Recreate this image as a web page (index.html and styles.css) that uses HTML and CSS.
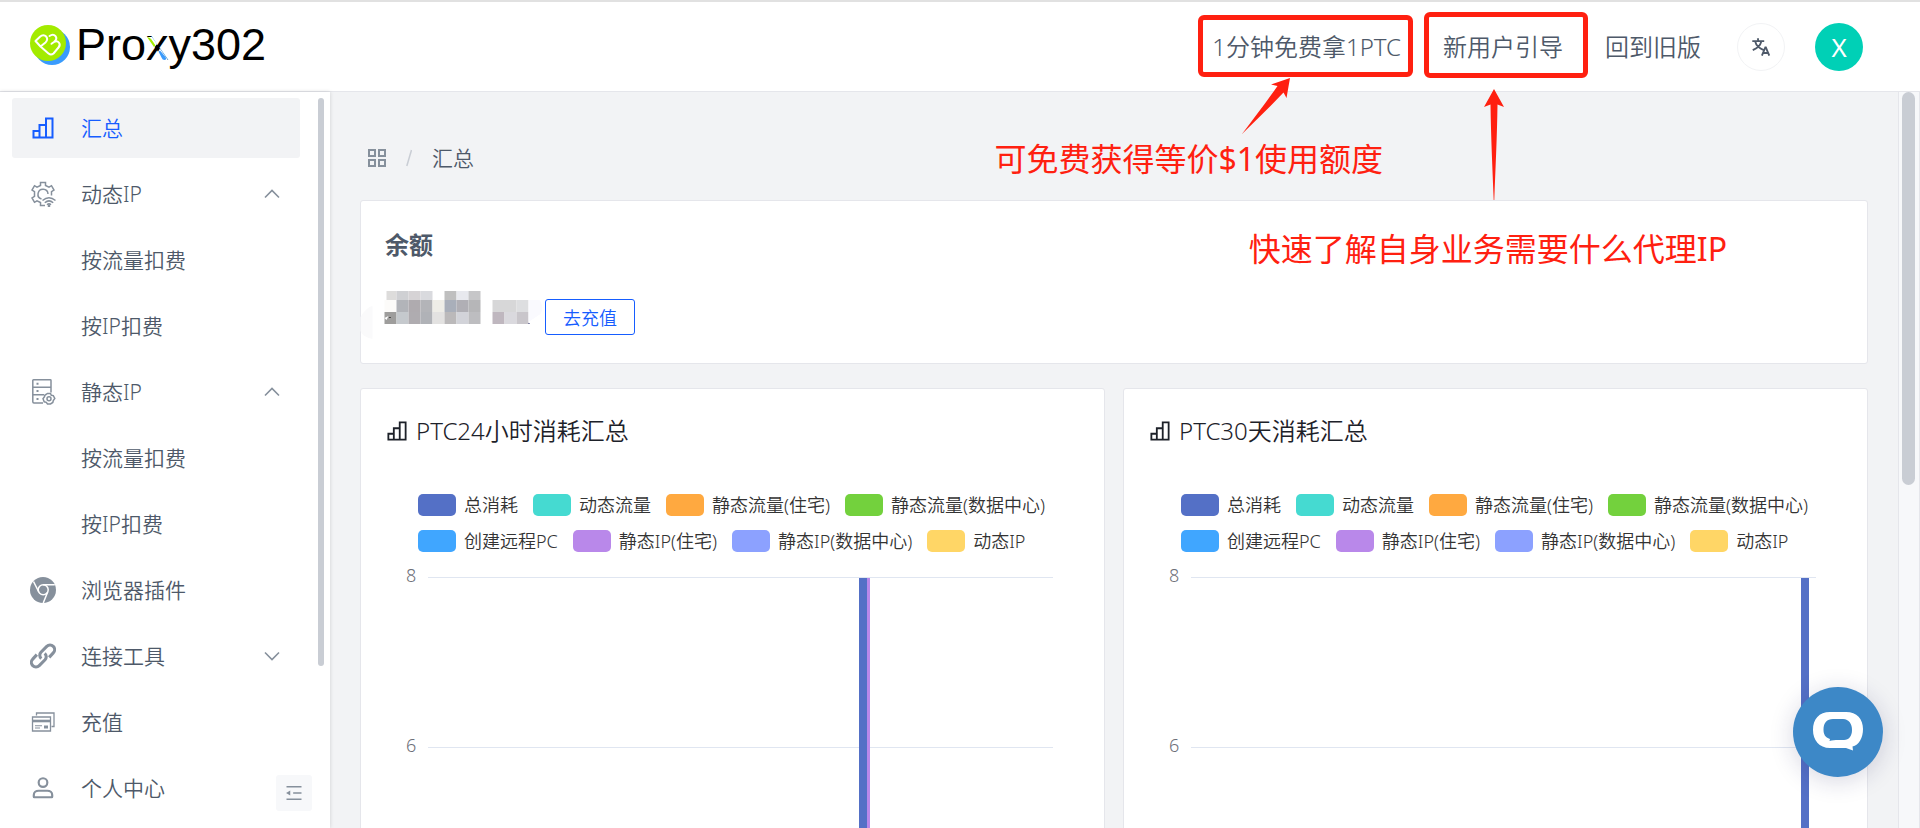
FILE: index.html
```html
<!DOCTYPE html>
<html lang="zh-CN">
<head>
<meta charset="utf-8">
<meta name="viewport" content="width=device-width, initial-scale=1">
<title>Proxy302 - 汇总</title>
<link rel="stylesheet" href="styles.css">
</head>
<body>
<svg class="sprite" aria-hidden="true">
  <symbol id="i-bars" viewBox="0 0 22 22"><path d="M1.500 20.500V14H7.500V20.500ZM7.500 20.500V8H14V20.500ZM14 20.500V1.500H20.500V20.500Z" fill="none" stroke="currentColor" stroke-width="2"/></symbol>
  <symbol id="i-down" viewBox="0 0 16 16"><path d="M1 4.500 8 11.500 15 4.500" fill="none" stroke="currentColor" stroke-width="1.600"/></symbol>
  <symbol id="i-up" viewBox="0 0 16 16"><path d="M1 11.500 8 4.500 15 11.500" fill="none" stroke="currentColor" stroke-width="1.600"/></symbol>
</svg>

<header class="topbar">
  <a class="brand" href="#" aria-label="Proxy302">
    <svg class="brand-mark" viewBox="0 0 40 40" aria-hidden="true">
      <circle cx="22" cy="22" r="18" fill="#3a9bfc"/>
      <circle cx="18" cy="18" r="18" fill="#a3eb00"/>
      <path d="M10.500 21.500 5.500 16 10 11.800C14.500 7.500 20 13.500 15.500 17.500L10.500 21.500 18.500 28.500C20 29.800 22 29.800 23.500 28.500L28.500 22.500C31.500 19 28 14.500 24 17L21.500 18.800M24 17C29 13 24.500 7.500 19.500 11" fill="none" stroke="#fff" stroke-width="2" stroke-linejoin="round" stroke-linecap="round"/>
    </svg>
    <span class="brand-name">Pro<span class="brand-x">x<svg viewBox="0 0 22 24" aria-hidden="true"><path d="M0 0H6L11 7 8 11ZM14 11.500 22.500 24H15L11 16Z" fill="#fff"/><path d="M1 0Q4 0 5.500 2.500L9.500 8.500 8 10Z" fill="#a3eb00"/><path d="M12.500 14.500 14 13.500 19.500 20Q21 23 18.500 23 16.500 23 15.500 20.500Z" fill="#3a9bfc"/></svg></span>y302</span>
  </a>
  <nav class="top-links">
    <a class="top-link boxed-a" href="#">1分钟免费拿1PTC</a>
    <a class="top-link boxed-b" href="#">新用户引导</a>
    <a class="top-link" href="#">回到旧版</a>
  </nav>
  <button class="lang" type="button" aria-label="语言">
    <svg viewBox="0 0 48 48" aria-hidden="true"><path d="m42 43-2.385-6M26 43l2.384-6m11.231 0-.795-2-4.180-10h-1.280l-4.181 10-.795 2m11.231 0h-11.230M17 5l1 5M5 11h26M11 11s1.889 7.826 6.611 12.174C22.333 27.522 30 31 30 31M25 11s-1.889 7.826-6.611 12.174C13.667 27.522 6 31 6 31" fill="none" stroke="currentColor" stroke-width="4"/></svg>
  </button>
  <button class="avatar" type="button">X</button>
</header>

<div class="body">
  <aside class="sidebar">
    <nav class="menu">
      <a class="item active" href="#"><svg class="ico bars" aria-hidden="true"><use href="#i-bars"/></svg><span>汇总</span></a>
      <a class="item" href="#"><svg class="ico" viewBox="0 0 26 26" fill="none" stroke="currentColor" stroke-width="1.500" aria-hidden="true"><path d="M15 24.500H10.500V21.500L7 19.800 4.500 21.300 2 17 4.500 15.300V10.700L2 9 4.500 4.700 7 6.200 10.500 4.500V1.500H15.500V4.500L19 6.200 21.500 4.700 24 9 21.500 10.700V14.500"/><path d="M11.500 18A5 5 0 1 1 18 13"/><path d="M12.500 19.500Q19 14 25.500 19.500M14.800 21.700Q19 18 23.200 21.700M17 23.700Q19 22 21 23.700"/><circle cx="19" cy="25" r=".6" fill="currentColor"/></svg><span>动态IP</span><svg class="chev" aria-hidden="true"><use href="#i-up"/></svg></a>
      <a class="item" href="#"><span class="ico"></span><span>按流量扣费</span></a>
      <a class="item" href="#"><span class="ico"></span><span>按IP扣费</span></a>
      <a class="item" href="#"><svg class="ico" viewBox="0 0 26 26" fill="none" stroke="currentColor" stroke-width="1.500" aria-hidden="true"><path d="M13 24H4Q2.800 24 2.800 22.800V1.500Q2.800.8 3.500.8H20.300Q21 .8 21 1.500V13.500M2.800 8.200H21M2.800 15.800H14"/><path d="M6.500 4.700h2M6.500 12h2M6.500 20h2" stroke-width="2"/><path d="M17.500 14.500H20.500L21.300 16.300 23.300 16.600 24.800 19.500 23.300 21.500 22.800 23.500 20.500 25H17.500L16.300 23.300 14.200 22.800 13 19.700 14.500 17.800 14.800 16.300Z"/><circle cx="19" cy="19.800" r="2"/></svg><span>静态IP</span><svg class="chev" aria-hidden="true"><use href="#i-up"/></svg></a>
      <a class="item" href="#"><span class="ico"></span><span>按流量扣费</span></a>
      <a class="item" href="#"><span class="ico"></span><span>按IP扣费</span></a>
      <a class="item" href="#"><svg class="ico" viewBox="0 0 26 26" aria-hidden="true"><circle cx="13" cy="13" r="13" fill="currentColor"/><circle cx="13.200" cy="12.700" r="5" fill="none" stroke="#fff" stroke-width="1.500"/><path d="M3.500 4.500 8.800 15M13 7.700H24.800M17.700 15 13.200 26" fill="none" stroke="#fff" stroke-width="1.500"/></svg><span>浏览器插件</span></a>
      <a class="item" href="#"><svg class="ico" viewBox="5 5 38 38" aria-hidden="true"><path d="m15 22-6 6.500a6.500 6.500 0 0 0 9.500 9.500l8.500-8.500a6.500 6.500 0 0 0-.5-9.300m6.500 5.800 6-6.500a6.500 6.500 0 0 0-9.500-9.500l-8.500 8.500a6.500 6.500 0 0 0 .5 9.300" fill="none" stroke="currentColor" stroke-width="4.500"/></svg><span>连接工具</span><svg class="chev" aria-hidden="true"><use href="#i-down"/></svg></a>
      <a class="item" href="#"><svg class="ico" viewBox="0 0 26 26" fill="none" stroke="currentColor" aria-hidden="true"><path d="M6.500 6.500V4H24V17.500H21.500" stroke-width="1.300"/><path d="M2.500 8H20.500V22H2.500Z" stroke-width="1.300"/><path d="M2.500 12H20.500" stroke-width="2.600"/><path d="M5 16.700h7M5 19h5" stroke-width="1.100"/><path d="M14 18h4" stroke-width="3"/></svg><span>充值</span></a>
      <a class="item" href="#"><svg class="ico" viewBox="0 0 48 48" fill="none" stroke="currentColor" stroke-width="4" aria-hidden="true"><path d="M7 37c0-4.970 4.030-8 9-8h16c4.970 0 9 3.030 9 8v3a1 1 0 0 1-1 1H8a1 1 0 0 1-1-1v-3Z"/><circle cx="24" cy="14" r="8"/></svg><span>个人中心</span></a>
    </nav>
    <div class="side-thumb"></div>
    <button class="fold" type="button" aria-label="收起菜单">
      <svg viewBox="0 0 48 48" aria-hidden="true"><path d="M42 9H6M42 24H22M42 39H6" fill="none" stroke="currentColor" stroke-width="4"/><path d="M15 30 5 24 15 18Z" fill="currentColor"/></svg>
    </button>
  </aside>

  <main class="main">
    <nav class="crumbs" aria-label="breadcrumb">
      <svg class="apps" viewBox="0 0 18 18" aria-hidden="true"><path d="M1 1H7V7H1ZM11 1H17V7H11ZM1 11H7V17H1ZM11 11H17V17H11Z" fill="none" stroke="currentColor" stroke-width="2"/></svg>
      <svg class="slash" viewBox="0 0 6 18" aria-hidden="true"><path d="M5.500 1 .8 17" stroke="currentColor" stroke-width="1.500"/></svg>
      <span>汇总</span>
    </nav>

    <section class="card balance">
      <h2>余额</h2>
      <div class="balance-row">
        <svg class="mosaic" viewBox="0 0 160 33" aria-hidden="true">
          <path d="M-24 26Q-18 16 -12 15V48Q-22 46-24 40Z" fill="#fafafb"/>
          <g><rect x="2" width="10" height="9" fill="#dddcdb"/><rect x="12" width="12" height="9" fill="#cfd0d3"/><rect x="24" width="12" height="9" fill="#d6d3d5"/><rect x="36" width="12" height="9" fill="#d9dade"/><rect x="60" width="12" height="9" fill="#bfbfbf"/><rect x="72" width="12" height="9" fill="#e8e9ee"/><rect x="84" width="12" height="9" fill="#c6c6c8"/></g>
          <g><rect y="9" width="12" height="12" fill="#fcfbf9"/><rect x="12" y="9" width="12" height="12" fill="#b2b4b9"/><rect x="24" y="9" width="12" height="12" fill="#afabaf"/><rect x="36" y="9" width="12" height="12" fill="#b3b4b8"/><rect x="48" y="9" width="12" height="12" fill="#eeede7"/><rect x="60" y="9" width="12" height="12" fill="#a9afba"/><rect x="72" y="9" width="12" height="12" fill="#b0afb5"/><rect x="84" y="9" width="12" height="12" fill="#b6b6b8"/></g>
          <g><rect y="21" width="12" height="12" fill="#9e9d9c"/><rect x="12" y="21" width="12" height="12" fill="#c5c9cd"/><rect x="24" y="21" width="12" height="12" fill="#afacb0"/><rect x="36" y="21" width="12" height="12" fill="#b0b2b7"/><rect x="48" y="21" width="12" height="12" fill="#e3e2e1"/><rect x="60" y="21" width="12" height="12" fill="#bbb9ba"/><rect x="72" y="21" width="12" height="12" fill="#d2d3d9"/><rect x="84" y="21" width="12" height="12" fill="#bdbdc0"/></g>
          <g><rect x="108" y="9" width="24" height="12" fill="#d7d7d8"/><rect x="132" y="9" width="12" height="12" fill="#dddee0"/><rect x="108" y="21" width="12" height="12" fill="#bfb7bf"/><rect x="120" y="21" width="12" height="12" fill="#dad9de"/><rect x="132" y="21" width="12" height="12" fill="#c9c6cb"/></g>
          <path d="M144 9H155Q160 16 156 23L144 31Z" fill="#fafafe"/><path d="M0 27 4 25 2 29Z" fill="#fff"/><rect x="144" y="32" width="1" height="1" fill="#1d2160"/><rect x="5" y="26" width="1" height="1" fill="#000"/>
        </svg>
        <button class="recharge" type="button">去充值</button>
      </div>
    </section>

    <div class="charts">
      <section class="card chart">
        <h3><svg class="bars" aria-hidden="true"><use href="#i-bars"/></svg>PTC24小时消耗汇总</h3>
        <ul class="legend">
          <li><i class="c1"></i>总消耗</li><li><i class="c2"></i>动态流量</li><li><i class="c3"></i>静态流量(住宅)</li><li><i class="c4"></i>静态流量(数据中心)</li><li><i class="c5"></i>创建远程PC</li><li><i class="c6"></i>静态IP(住宅)</li><li><i class="c7"></i>静态IP(数据中心)</li><li><i class="c8"></i>动态IP</li>
        </ul>
        <div class="plot">
          <div class="axis"><span>8</span><span>6</span></div>
          <div class="grid"><div class="band"></div><div class="band"></div>
            <div class="bar" style="left:69%"><i class="c1"></i><i class="thin c6"></i></div>
          </div>
        </div>
      </section>
      <section class="card chart">
        <h3><svg class="bars" aria-hidden="true"><use href="#i-bars"/></svg>PTC30天消耗汇总</h3>
        <ul class="legend">
          <li><i class="c1"></i>总消耗</li><li><i class="c2"></i>动态流量</li><li><i class="c3"></i>静态流量(住宅)</li><li><i class="c4"></i>静态流量(数据中心)</li><li><i class="c5"></i>创建远程PC</li><li><i class="c6"></i>静态IP(住宅)</li><li><i class="c7"></i>静态IP(数据中心)</li><li><i class="c8"></i>动态IP</li>
        </ul>
        <div class="plot">
          <div class="axis"><span>8</span><span>6</span></div>
          <div class="grid"><div class="band"></div><div class="band"></div>
            <div class="bar" style="left:97.6%"><i class="c1"></i></div>
          </div>
        </div>
      </section>
    </div>
  </main>
  <div class="scroll"><div class="scroll-thumb"></div></div>
</div>

<svg class="arrows" viewBox="0 0 270 130" aria-hidden="true">
  <path d="M50 0 46.500 20 43.500 14.500C30 29 16 42 2 56 14 40 27 23 37.500 8L31 6.500Z" fill="#ff2010"/>
  <path d="M254 11 264 29 257.500 26.500C257 60 255.500 90 254.300 122H253.700C252.500 90 251 60 250.500 26.500L244 29Z" fill="#ff2010"/>
</svg>
<p class="note note-a">可免费获得等价$1使用额度</p>
<p class="note note-b">快速了解自身业务需要什么代理IP</p>

<button class="chat" type="button" aria-label="在线客服">
  <svg viewBox="0 0 50 40" aria-hidden="true"><path d="M17 0H33C44 0 50 7 50 17 50 26 46 33 39.500 34.500L40 38.500 33 36H17C6 36 0 28 0 18 0 7 6 0 17 0Z" fill="#fff"/><path d="M20 7H30C36 7 39 12 39 18 39 24 36 28 31 28 26 28 21 27.500 16.500 29L17 27C12 25.500 10.500 22 10.500 17.500 10.500 11 14 7 20 7Z" fill="#3d88c7"/></svg>
</button>
</body>
</html>
```
FILE: styles.css
```css
* { box-sizing: border-box; }

body {
  margin: 0;
  height: 100vh;
  display: flex;
  flex-direction: column;
  overflow: hidden;
  position: relative;
  background: #f2f3f5;
  color: #4e5969;
  font-family: "Noto Sans", "Noto Sans CJK SC", sans-serif;
  font-size: 21px;
  font-weight: 350;
}

a { color: inherit; text-decoration: none; }
button { font: inherit; padding: 0; border: 0; cursor: pointer; }
h2, h3, p, ul { margin: 0; padding: 0; }
svg { display: block; }
.sprite { display: none; }

/* Top bar */
.topbar {
  flex: none;
  display: flex;
  align-items: center;
  height: 92px;
  padding: 0 57px 0 30px;
  background: #fff;
  border-top: 2px solid #e1e1e1;
  border-bottom: 1px solid #e5e6eb;
}
.brand { display: flex; align-items: center; gap: 6px; margin-right: auto; padding-bottom: 4px; color: #000; }
.brand-mark { width: 40px; height: 40px; }
.brand-name { font: 400 45px/48px "Liberation Sans", Arial, sans-serif; }
.brand-x { position: relative; }
.brand-x svg { position: absolute; left: 0; bottom: 9px; width: 22px; height: 24px; }
.top-links { display: flex; gap: 42px; margin-right: 36px; font-size: 24px; line-height: 36px; }
.top-link { position: relative; white-space: nowrap; }
.top-link::before {
  position: absolute;
  border: 5px solid #ff2010;
  border-radius: 6px;
}
.boxed-a::before { content: ""; inset: -14px -12px -12px -14px; }
.boxed-b::before { content: ""; inset: -17px -25px -13px -19px; }
.lang {
  width: 48px;
  height: 48px;
  display: grid;
  place-items: center;
  margin-right: 30px;
  border: 1px solid #f2f3f5;
  border-radius: 50%;
  background: #fff;
  color: #4e5969;
}
.lang svg { width: 22px; height: 22px; }
.avatar {
  width: 48px;
  height: 48px;
  border-radius: 50%;
  background: #00d0b6;
  color: #fff;
  font-size: 26px;
  font-weight: 400;
}

/* Shell */
.body { flex: 1; min-height: 0; display: flex; }
.sidebar {
  flex: none;
  position: relative;
  width: 330px;
  display: flex;
  justify-content: space-between;
  padding: 6px 6px 0 12px;
  background: #fff;
  box-shadow: 0 0 4px rgba(0, 0, 0, .15);
}
.menu { width: 288px; display: flex; flex-direction: column; gap: 6px; }
.item {
  flex: none;
  display: flex;
  align-items: center;
  gap: 25px;
  height: 60px;
  padding: 0 20px 0 18px;
  border-radius: 3px;
}
.item span { padding-bottom: 2px; }
.item.active { background: #f2f3f5; color: #165dff; }
.ico { flex: none; width: 26px; height: 26px; color: #86909c; }
.ico.bars { width: 22px; height: 22px; margin: 0 2px; color: #165dff; }
.chev { width: 16px; height: 16px; margin-left: auto; color: #86909c; }
.side-thumb { width: 6px; height: 568px; border-radius: 3px; background: #c9cdd4; }
.fold {
  position: absolute;
  right: 18px;
  bottom: 17px;
  width: 36px;
  height: 36px;
  display: grid;
  place-items: center;
  border-radius: 3px;
  background: #f7f8fa;
  color: #86909c;
}
.fold svg { width: 20px; height: 20px; }

.main {
  flex: 1;
  min-width: 0;
  overflow: hidden;
  padding: 48px 30px 0;
}
.scroll {
  flex: none;
  width: 22px;
  display: flex;
  padding-left: 3px;
  background: #f7f8fa;
  border: solid #e5e6eb;
  border-width: 0 1px;
}
.scroll-thumb { width: 13px; height: 393px; border-radius: 7px; background: #c9cdd4; }

/* Content */
.crumbs { display: flex; align-items: center; gap: 20px; height: 36px; padding-left: 8px; }
.crumbs span { padding-bottom: 2px; }
.apps { width: 18px; height: 18px; color: #86909c; }
.slash { width: 6px; height: 18px; color: #c9cdd4; }
.card { background: #fff; border: 1px solid #e5e6eb; border-radius: 3px; }
.balance { margin: 24px 0; padding: 26px 24px 28px; }
.balance h2 { font-size: 24px; line-height: 36px; font-weight: 700; }
.balance-row { display: flex; align-items: flex-end; margin: 28px 0 0 -1px; height: 44px; }
.mosaic { width: 161px; height: 33px; overflow: visible; align-self: flex-start; }
.recharge {
  width: 90px;
  height: 36px;
  border: 1px solid #165dff;
  border-radius: 3px;
  background: #fff;
  color: #165dff;
  font-size: 18px;
}

.charts { display: flex; gap: 18px; }
.chart { flex: 1; min-width: 0; padding: 24px 51px 0 45px; }
.chart h3 {
  display: flex;
  align-items: center;
  gap: 9px;
  margin-left: -19px;
  color: #1d2129;
  font-size: 24px;
  line-height: 36px;
  font-weight: 350;
}
.chart .bars { width: 20px; height: 20px; }
.legend {
  display: flex;
  flex-wrap: wrap;
  column-gap: 15px;
  margin-top: 38px;
  padding-left: 12px;
  list-style: none;
  color: #333;
  font-size: 18px;
  line-height: 36px;
}
.legend li { display: flex; align-items: center; gap: 8px; white-space: nowrap; }
.legend i { width: 38px; height: 22px; border-radius: 5px; }
.c1 { background: #5470c6; }
.c2 { background: #45dad1; }
.c3 { background: #ffa940; }
.c4 { background: #73d13d; }
.c5 { background: #40a6ff; }
.c6 { background: #b988ea; }
.c7 { background: #8ca1ff; }
.c8 { background: #ffd666; }

.plot { display: flex; gap: 12px; margin-top: 18px; }
.axis {
  display: flex;
  flex-direction: column;
  margin-top: -14px;
  color: #6e7079;
  font-size: 18px;
  line-height: 24px;
}
.axis span { height: 170px; }
.grid { flex: 1; position: relative; }
.band { height: 170px; border-top: 1px solid #e0e6f1; }
.bar { position: absolute; top: 1px; bottom: 0; display: flex; }
.bar i { width: 8px; }
.bar .thin { width: 3px; }

/* Callouts */
.arrows { position: absolute; right: 410px; top: 78px; width: 270px; height: 130px; }
.note {
  position: absolute;
  color: #ff2010;
  font-size: 32px;
  line-height: 48px;
  font-weight: 400;
  white-space: nowrap;
}
.note-a { right: 537px; top: 135px; }
.note-b { right: 193px; top: 225px; }

.chat {
  position: absolute;
  right: 37px;
  bottom: 51px;
  width: 90px;
  height: 90px;
  display: grid;
  place-items: center;
  border-radius: 50%;
  background: #3d88c7;
  box-shadow: 0 4px 24px rgba(30, 30, 90, .18);
}
.chat svg { width: 50px; height: 40px; }
```
